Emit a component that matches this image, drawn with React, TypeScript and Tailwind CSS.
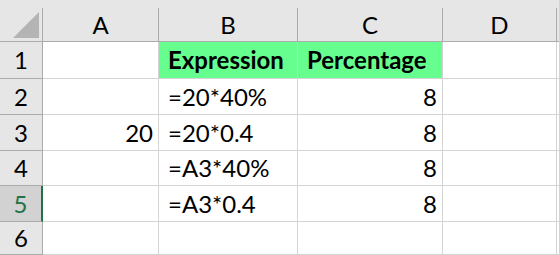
import React from 'react';

// Spreadsheet grid with a highlighted header row and formula examples
const cols = [
  { key: 'A', width: 'w-[116px]' },
  { key: 'B', width: 'w-[139px]' },
  { key: 'C', width: 'w-[145px]' },
  { key: 'D', width: 'w-[114px]' },
];

type Cell = { text?: string; align?: 'left' | 'right'; bold?: boolean; fill?: boolean };

const rows: { n: number; h: string; cells: Cell[] }[] = [
  {
    n: 1,
    h: 'h-[37px]',
    cells: [{}, { text: 'Expression', bold: true, fill: true }, { text: 'Percentage', bold: true, fill: true }, {}],
  },
  { n: 2, h: 'h-[36px]', cells: [{}, { text: '=20*40%' }, { text: '8', align: 'right' }, {}] },
  {
    n: 3,
    h: 'h-[36px]',
    cells: [{ text: '20', align: 'right' }, { text: '=20*0.4' }, { text: '8', align: 'right' }, {}],
  },
  { n: 4, h: 'h-[35px]', cells: [{}, { text: '=A3*40%' }, { text: '8', align: 'right' }, {}] },
  { n: 5, h: 'h-[36px]', cells: [{}, { text: '=A3*0.4' }, { text: '8', align: 'right' }, {}] },
  { n: 6, h: 'h-[33px]', cells: [{}, {}, {}, {}] },
];

const selectedRow = 5;

export default function App() {
  return (
    <div className="w-[559px] h-[255px] overflow-hidden bg-white font-['Lato','Liberation_Sans',sans-serif] text-[24px] text-black">
      {/* column headers */}
      <div className="flex h-[42px] bg-[#e6e6e6] border-b border-[#ababab]">
        <div className="w-[43px] shrink-0 flex flex-col">
          <div className="h-[8px]" />
          <div className="flex-1 flex items-end justify-end pr-[3px] pb-[3px] border-r border-[#ababab]">
            <svg width="26" height="26" viewBox="0 0 26 26">
              <polygon points="26,0 26,26 0,26" fill="#b4b4b4" />
            </svg>
          </div>
        </div>
        {cols.map((c) => (
          <div key={c.key} className={`${c.width} shrink-0 flex flex-col`}>
            <div className="h-[8px]" />
            <div className="flex-1 flex items-center justify-center border-r border-[#ababab] leading-none">
              {c.key}
            </div>
          </div>
        ))}
        <div className="flex-1" />
      </div>

      {rows.map((r) => {
        const sel = r.n === selectedRow;
        return (
          <div key={r.n} className={`flex ${r.h}`}>
            <div
              className={`w-[43px] shrink-0 flex items-center justify-center border-b border-[#ababab] ${
                sel
                  ? 'bg-[#d2d2d2] text-[#217346] border-r-2 border-r-[#217346]'
                  : 'bg-[#e6e6e6] border-r border-r-[#ababab]'
              }`}
            >
              {r.n}
            </div>
            {r.cells.map((cell, i) => (
              <div
                key={i}
                className={`${cols[i].width} shrink-0 flex items-center border-r border-b border-[#d4d4d4] whitespace-nowrap ${
                  cell.fill ? 'bg-[#66ff8f]' : ''
                } ${cell.bold ? 'font-bold' : ''} ${
                  cell.align === 'right' ? 'justify-end pr-[5px]' : 'pl-[9px]'
                }`}
              >
                {cell.text}
              </div>
            ))}
            <div className="flex-1 border-b border-[#d4d4d4]" />
          </div>
        );
      })}
    </div>
  );
}
